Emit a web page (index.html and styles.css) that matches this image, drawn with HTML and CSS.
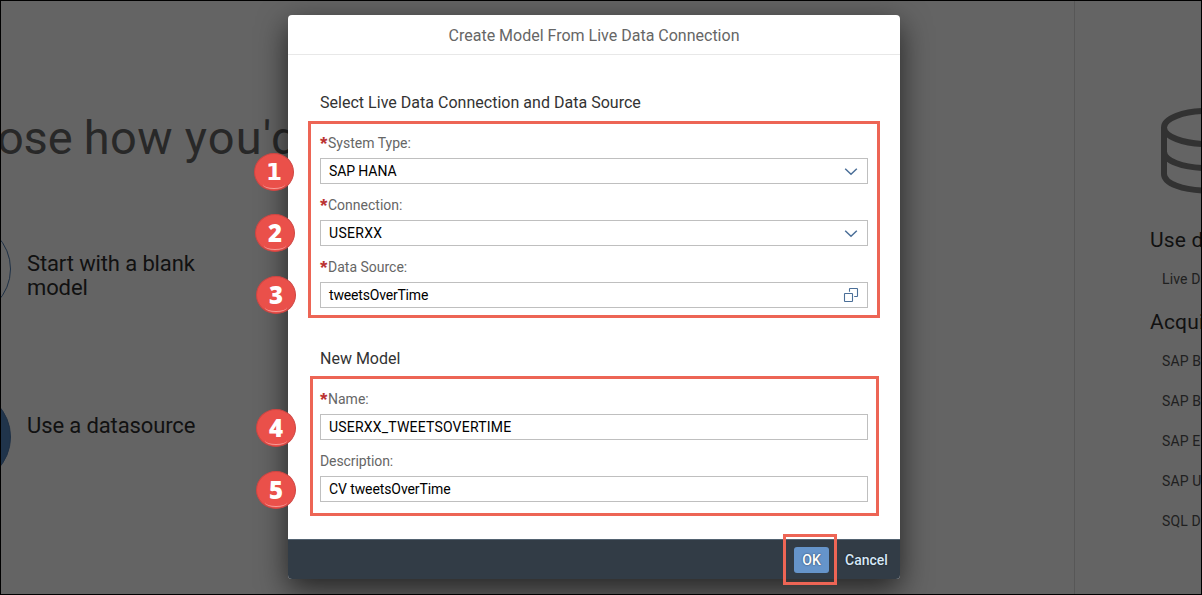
FILE: index.html
```html
<!DOCTYPE html>
<html lang="en">
<head>
<meta charset="utf-8">
<title>Create Model</title>
<link rel="stylesheet" href="styles.css">
</head>
<body>
<div class="screen">
  <main class="start">
    <h1 class="title"><span class="w1">ose </span><span class="w2">how </span><span class="w3">you'd</span></h1>
    <div class="choice choice-blank"><span class="disc"></span><span class="choice-text">Start with a blank<br>model</span></div>
    <div class="choice choice-data"><span class="disc filled"></span><span class="choice-text wide">Use a datasource</span></div>
  </main>
  <aside class="sources">
    <svg class="db" width="94" height="86" viewBox="0 0 94 86" fill="none" stroke="#323232" stroke-width="6">
      <ellipse cx="47" cy="19.500" rx="43" ry="16.500"/>
      <path d="M4 19.500V66c0 9.500 19 16.500 43 16.500S90 75.500 90 66V19.500M4 43.500c0 9.500 19 16.500 43 16.500s43-7 43-16.500"/>
    </svg>
    <h2 class="group">Use data</h2>
    <p class="source">Live Data</p>
    <h2 class="group second">Acquire</h2>
    <p class="source">SAP BW</p>
    <p class="source">SAP BPC</p>
    <p class="source">SAP ERP</p>
    <p class="source">SAP Universe</p>
    <p class="source">SQL Databases</p>
  </aside>
</div>

<section class="dialog">
  <header class="dialog-head">Create Model From Live Data Connection</header>
  <div class="dialog-body">
    <h3 class="section"><span class="t-select">Select Live Data Connection and Data Source</span></h3>
    <div class="fields">
      <div class="field"><label class="label"><b class="req">*</b><span>System Type:</span></label>
        <div class="input"><span class="v-hana">SAP HANA</span><svg class="icon" width="16" height="16" viewBox="0 0 16 16"><path d="M2.200 5.700 8 11.200l5.800-5.500"/></svg></div></div>
      <div class="field"><label class="label"><b class="req">*</b><span>Connection:</span></label>
        <div class="input"><span class="v-user">USERXX</span><svg class="icon" width="16" height="16" viewBox="0 0 16 16"><path d="M2.200 5.700 8 11.200l5.800-5.500"/></svg></div></div>
      <div class="field"><label class="label"><b class="req">*</b><span>Data Source:</span></label>
        <div class="input"><span class="v-tweets">tweetsOverTime</span><svg class="icon thin" width="16" height="16" viewBox="0 0 16 16"><rect x="1.500" y="6.500" width="8" height="8" rx=".5"/><path d="M6.500 4.800V2q0-.5.5-.5h7q.5 0 .5.500v7q0 .500-.500.500h-2.800"/></svg></div></div>
    </div>
    <h3 class="section next">New Model</h3>
    <div class="fields">
      <div class="field"><label class="label"><b class="req">*</b><span>Name:</span></label>
        <div class="input"><span class="v-name">USERXX_TWEETSOVERTIME</span></div></div>
      <div class="field"><label class="label"><span class="l-desc">Description:</span></label>
        <div class="input"><span class="v-desc">CV tweetsOverTime</span></div></div>
    </div>
  </div>
  <footer class="dialog-foot"><button class="btn ok">OK</button><button class="btn cancel">Cancel</button></footer>
</section>

<div class="frame frame-source"></div>
<div class="frame frame-model"></div>
<div class="frame frame-ok"></div>
<div class="badge b1">1</div>
<div class="badge b2">2</div>
<div class="badge b3">3</div>
<div class="badge b4">4</div>
<div class="badge b5">5</div>
<div class="edge"></div>
</body>
</html>
```
FILE: styles.css
```css
* { box-sizing: border-box; }
body { margin: 0; width: 1202px; height: 595px; overflow: hidden; position: relative; background: #646464; font-family: Roboto, "Liberation Sans", sans-serif; }
h1, h2, h3, p { margin: 0; font-weight: 400; }
.screen { display: flex; height: 595px; }
.start { width: 1075px; flex: none; border-right: 1px solid #575757; padding-top: 108px; overflow: hidden; }
.title { font-size: 47px; line-height: 60px; height: 60px; color: #282828; white-space: pre; margin-left: -3px; }
.w1 { letter-spacing: -.2px; }
.w2 { letter-spacing: .3px; }
.w3 { letter-spacing: 1.200px; }
.choice { display: flex; align-items: center; color: #111; font-size: 22px; line-height: 24px; height: 66px; }
.choice-blank { margin-top: 68px; }
.choice-data { margin-top: 102px; }
.disc { flex: none; width: 96px; height: 96px; margin: 0 0 0 -85px; border: 1px solid #1e3045; border-radius: 50%; }
.filled { background: #20344b; }
.choice-text { margin-left: 16px; padding-top: 13px; letter-spacing: -.12px; }
.choice-data .choice-text { padding: 0 0 23px; }

.sources { flex: 1; padding: 108px 0 0 75px; overflow: hidden; white-space: nowrap; }
.db { display: block; margin-left: 10px; }
.group { font-size: 21px; line-height: 28px; color: #111; margin-top: 32px; letter-spacing: .2px; }
.source { font-size: 14px; line-height: 20px; height: 20px; color: #202020; margin: 15px 0 0 12px; letter-spacing: .15px; }
.second { margin-top: 19px; }
.source + .source { margin-top: 20px; }

.dialog { position: absolute; left: 288px; top: 15px; width: 612px; height: 564px; display: flex; flex-direction: column; background: #fff; border-radius: 4px; overflow: hidden; box-shadow: 0 10px 30px rgba(0,0,0,.65); }
.dialog-head { height: 40px; flex: none; border-bottom: 1px solid #e8e8e8; text-align: center; font-size: 16px; line-height: 41px; color: #666; }
.dialog-body { flex: 1; padding: 37px 32px 0; }
.section { font-size: 16px; line-height: 22px; height: 20px; color: #333; white-space: nowrap; }
.t-select { letter-spacing: .02px; }
.next { margin-top: 40px; }
.fields { display: flex; flex-direction: column; gap: 11px; margin-top: 21px; }
.field { display: flex; flex-direction: column; gap: 5px; }
.label { display: flex; height: 20px; font-size: 14px; line-height: 20px; color: #666; }
.req { width: 8px; color: #b33; font-size: 19px; line-height: 22px; font-family: "Liberation Sans", Arial, sans-serif; }
.l-desc { letter-spacing: -.1px; }
.input { display: flex; align-items: center; justify-content: space-between; height: 26px; border: 1px solid #bfbfbf; padding: 0 8px; font-size: 14px; color: #000; }
.v-hana { letter-spacing: -.1px; }
.v-user { letter-spacing: .3px; }
.v-tweets { letter-spacing: -.18px; }
.v-name { letter-spacing: .2px; }
.v-desc { letter-spacing: -.1px; }
.icon { fill: none; stroke: #4b6f98; stroke-width: 1.500; }
.thin { stroke-width: 1.100; }
.dialog-foot { height: 40px; flex: none; display: flex; align-items: center; justify-content: flex-end; gap: 16px; padding: 1px 12px 0 0; background: #323c46; border-top: 1px solid #536371; }
.btn { font: 500 14px/26px Roboto, "Liberation Sans", sans-serif; height: 26px; border: 0; padding: 0; color: #fff; background: none; text-shadow: 0 0 2px rgba(0,0,0,.6); }
.ok { width: 35px; background: #6594ca; border-radius: 3px; }
.cancel { width: 43px; color: #d5e7f7; }

.frame { position: absolute; border: 3px solid #ed6555; }
.frame-source { left: 308px; top: 121px; width: 572px; height: 197px; }
.frame-model { left: 310px; top: 376px; width: 569px; height: 140px; }
.frame-ok { left: 783px; top: 534px; width: 54px; height: 51px; }
.badge { position: absolute; width: 40px; height: 38px; border-radius: 50%; background: #ea504a; border: 1px solid #cf4542; color: #fff; font: 800 24px/36px "Open Sans", "DejaVu Sans", sans-serif; text-align: center; }
.badge::after { content: ""; position: absolute; left: 8px; bottom: 1px; width: 22px; height: 8px; border-bottom: 1px solid #f59a95; border-radius: 50%; }
.b1 { left: 254px; top: 153px; font-family: "DejaVu Sans", sans-serif; font-size: 23px; }
.b2 { left: 255px; top: 214px; }
.b3 { left: 256px; top: 276px; }
.b4 { left: 256px; top: 409px; }
.b5 { left: 256px; top: 471px; }
.edge { position: absolute; inset: 0; border: 1px solid #000; }
```
